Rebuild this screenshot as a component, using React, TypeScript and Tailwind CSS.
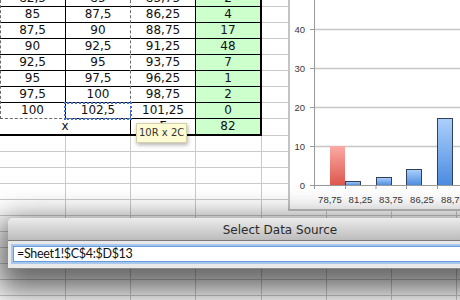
import React from "react";

const rows = [
  ["82,5", "85", "83,75", "2"],
  ["85", "87,5", "86,25", "4"],
  ["87,5", "90", "88,75", "17"],
  ["90", "92,5", "91,25", "48"],
  ["92,5", "95", "93,75", "7"],
  ["95", "97,5", "96,25", "1"],
  ["97,5", "100", "98,75", "2"],
  ["100", "102,5", "101,25", "0"],
];

const cellFont = { fontFamily: '"DejaVu Sans", Verdana, sans-serif' };

function GrayCells({ count }: { count: number }) {
  return (
    <>
      {Array.from({ length: count }).map((_, i) => (
        <div key={i} className="w-[65px] shrink-0 border-b border-r border-[#cacaca]" />
      ))}
    </>
  );
}

function EmptyRow() {
  return (
    <div className="flex h-4">
      <div className="w-[66px] shrink-0 border-b border-r border-[#cacaca]" />
      <div className="w-[65px] shrink-0 border-b border-r border-[#cacaca]" />
      <div className="w-[65px] shrink-0 border-b border-r border-[#cacaca]" />
      <div className="w-[66px] shrink-0 border-b border-r border-[#cacaca]" />
      <GrayCells count={4} />
    </div>
  );
}

function Chart() {
  const yTicks = [
    { v: "40", y: 29.5 },
    { v: "30", y: 68.5 },
    { v: "20", y: 107.5 },
    { v: "10", y: 146.5 },
    { v: "0", y: 185.5 },
  ];
  const cats = [
    { l: "78,75", x: 330 },
    { l: "81,25", x: 360.5 },
    { l: "83,75", x: 391 },
    { l: "86,25", x: 422 },
    { l: "88,75", x: 453 },
  ];
  const blue = [
    { x: 345.5, top: 181.5 },
    { x: 376.5, top: 177.5 },
    { x: 406.5, top: 169.5 },
    { x: 437.5, top: 118.5 },
  ];
  return (
    <div className="absolute left-[288px] top-0 w-[200px] h-[211px] border-l-2 border-b-2 border-[#c4c4c4] bg-white">
      <svg width="198" height="209" viewBox="290 0 198 209">
        <defs>
          <linearGradient id="gb" x1="0" y1="0" x2="0" y2="1">
            <stop offset="0" stopColor="#acd0fa" />
            <stop offset="1" stopColor="#4a8be0" />
          </linearGradient>
          <linearGradient id="gr" x1="0" y1="0" x2="0" y2="1">
            <stop offset="0" stopColor="#fcaaa6" />
            <stop offset="1" stopColor="#dc564c" />
          </linearGradient>
        </defs>
        {yTicks.slice(0, 4).map((t) => (
          <line key={t.v} x1="314" x2="500" y1={t.y} y2={t.y} stroke="#c6c6c6" strokeWidth="1.5" />
        ))}
        {yTicks.map((t) => (
          <g key={"t" + t.v}>
            <line x1="310" x2="314" y1={t.y} y2={t.y} stroke="#9a9a9a" />
            <text
              x="305"
              y={t.y + 3.5}
              textAnchor="end"
              fontSize="9.5"
              fill="#383838"
              fontFamily='"Liberation Sans", Arial, sans-serif'
            >
              {t.v}
            </text>
          </g>
        ))}
        <rect x="330" y="146" width="15" height="39.5" fill="url(#gr)" />
        {blue.map((b) => (
          <rect
            key={b.x}
            x={b.x}
            y={b.top}
            width="15"
            height={185.5 - b.top}
            fill="url(#gb)"
            stroke="#2f3f5c"
            strokeWidth="1"
          />
        ))}
        <line x1="314.5" x2="314.5" y1="0" y2="186" stroke="#9a9a9a" />
        <line x1="310" x2="500" y1="185.5" y2="185.5" stroke="#9a9a9a" />
        {[314.5, 345.5, 376, 406.5, 437.5].map((x) => (
          <line key={x} x1={x} x2={x} y1="185" y2="189" stroke="#9a9a9a" />
        ))}
        {cats.map((c) => (
          <text
            key={c.l}
            x={c.x}
            y="202.5"
            textAnchor="middle"
            fontSize="9.5"
            fill="#383838"
            fontFamily='"Liberation Sans", Arial, sans-serif'
          >
            {c.l}
          </text>
        ))}
      </svg>
    </div>
  );
}

export default function App() {
  return (
    <div className="relative w-[460px] h-[300px] overflow-hidden bg-white text-[12px] text-[#111]" style={cellFont}>
      <div className="-mt-[9px]">
        {rows.map((r, i) => (
          <div key={i} className="flex h-4 leading-[15px]">
            <div
              className={
                i === 7
                  ? "w-[66px] shrink-0 border-r border-black text-center"
                  : "w-[66px] shrink-0 border-b border-r border-black text-center"
              }
            >
              {r[0]}
            </div>
            <div className="w-[65px] shrink-0 border-b border-b-black border-r border-r-transparent text-center">
              {r[1]}
            </div>
            <div className="w-[65px] shrink-0 border-b border-r border-black text-center">{r[2]}</div>
            <div className="w-[66px] shrink-0 bg-[#ccffcc] border-b border-b-black border-r-2 border-r-black text-center">
              {r[3]}
            </div>
            <GrayCells count={4} />
          </div>
        ))}
        <div className="flex h-[17px] leading-[15px]">
          <div className="w-[131px] shrink-0 border-b-2 border-r border-black text-center">x</div>
          <div className="w-[65px] shrink-0 border-b-2 border-r border-black text-center">Σ</div>
          <div className="w-[66px] shrink-0 bg-[#ccffcc] border-b-2 border-r-2 border-black text-center">82</div>
          <GrayCells count={4} />
        </div>
        {Array.from({ length: 11 }).map((_, i) => (
          <EmptyRow key={i} />
        ))}
      </div>

      {/* copy marquee + active cell */}
      <div className="absolute left-0 top-[-10px] w-[131px] h-[129px] border border-dashed border-[#6a6a6a] pointer-events-none" />
      <div className="absolute left-[64px] top-[102px] w-[68px] h-[18px] border-2 border-dotted border-[#3b6fd6] pointer-events-none" />

      <Chart />

      <div className="absolute left-[136px] top-[123px] w-[51px] h-[20px] bg-[#fdfbd3] border border-[#d4d1a8] shadow-[1px_2px_4px_rgba(0,0,0,0.3)] text-[10px] leading-[18px] pl-[2px] text-[#333]">
        10R x 2C
      </div>

      <div className="absolute left-[8px] top-[218px] w-[544px] rounded-t-[5px] shadow-[0_12px_30px_10px_rgba(0,0,0,0.6)]">
        <div className="h-[23px] rounded-t-[5px] border-b border-[#7c7c7c] bg-gradient-to-b from-[#ececec] to-[#bcbcbc] text-center text-[12px] leading-[22px] pt-[1px] text-[#2a2a2a]">
          Select Data Source
        </div>
        <div className="h-[28px] bg-[#e9e9e9] border-b border-[#8a8a8a] pl-[5px] pt-[5px]">
          <div
            className="h-[16px] w-[520px] bg-white border border-[#6a9ad8] shadow-[0_0_0_2px_#a6c7ee] pl-[3px] text-[12.5px] leading-[14px] tracking-[-0.3px] text-[#111]"
            style={{ fontFamily: 'Lato, "DejaVu Sans", sans-serif' }}
          >
            =Sheet1!$C$4:$D$13
          </div>
        </div>
      </div>
    </div>
  );
}
